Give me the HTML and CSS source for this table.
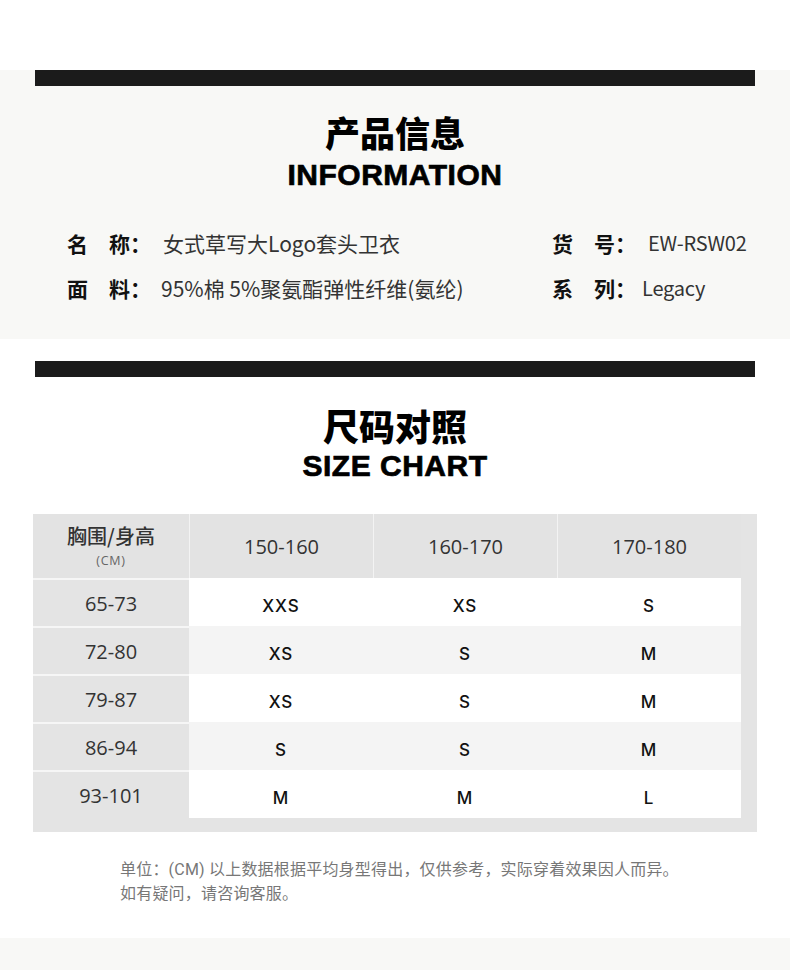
FILE: index.html
```html
<!DOCTYPE html>
<html lang="zh-CN">
<head>
<meta charset="utf-8">
<title>产品信息</title>
<link rel="stylesheet" href="styles.css">
</head>
<body>
<div class="top-space"></div>

<section class="info">
  <div class="bar"></div>
  <h1 class="title-cn">产品信息</h1>
  <h2 class="title-en">INFORMATION</h2>
  <div class="info-grid">
    <div class="info-item"><span class="label">名　称：</span><span class="value">女式草写大Logo套头卫衣</span></div>
    <div class="info-item right"><span class="label">货　号：</span><span class="value">EW-RSW02</span></div>
    <div class="info-item"><span class="label">面　料：</span><span class="value v2">95%棉 5%聚氨酯弹性纤维(氨纶)</span></div>
    <div class="info-item right"><span class="label">系　列：</span><span class="value v2">Legacy</span></div>
  </div>
</section>

<section class="size">
  <div class="bar"></div>
  <h1 class="title-cn">尺码对照</h1>
  <h2 class="title-en">SIZE CHART</h2>

  <div class="chart">
    <div class="grid">
      <div class="head first"><span class="head-cn">胸围/身高</span><span class="head-unit">(CM)</span></div>
      <div class="head">150-160</div>
      <div class="head">160-170</div>
      <div class="head">170-180</div>

      <div class="rowhead">65-73</div>
      <div class="cell">XXS</div><div class="cell">XS</div><div class="cell">S</div>

      <div class="rowhead">72-80</div>
      <div class="cell alt">XS</div><div class="cell alt">S</div><div class="cell alt">M</div>

      <div class="rowhead">79-87</div>
      <div class="cell">XS</div><div class="cell">S</div><div class="cell">M</div>

      <div class="rowhead">86-94</div>
      <div class="cell alt">S</div><div class="cell alt">S</div><div class="cell alt">M</div>

      <div class="rowhead">93-101</div>
      <div class="cell">M</div><div class="cell">M</div><div class="cell">L</div>
    </div>
  </div>

  <p class="note">单位：(CM) 以上数据根据平均身型得出，仅供参考，实际穿着效果因人而异。<br>如有疑问，请咨询客服。</p>
</section>

<div class="bottom-band"></div>
</body>
</html>
```

FILE: styles.css
```css
* { box-sizing: border-box; }
html, body { margin: 0; padding: 0; background: #ffffff; }
body { width: 790px; font-family: "Noto Sans CJK SC", sans-serif; color: #333; }
h1, h2, p { margin: 0; }

.top-space { height: 70px; }

.bar { height: 16px; margin: 0 35px; background: #1b1b1b; }

.title-cn {
  font-family: "Noto Sans CJK SC", sans-serif;
  font-weight: 900;
  font-size: 35px;
  line-height: 40px;
  text-align: center;
  color: #000;
}
.title-en {
  font-family: "Liberation Sans", Arial, sans-serif;
  font-weight: 700;
  font-size: 30px;
  line-height: 36px;
  text-align: center;
  color: #000;
  letter-spacing: 0.5px;
  -webkit-text-stroke: 0.7px #000;
}

/* info section */
.info { background: #f8f8f6; padding-bottom: 36px; }
.info .title-cn { margin-top: 26px; }
.info .title-en { margin-top: 5px; }

.info-grid {
  display: grid;
  grid-template-columns: 485px 1fr;
  row-gap: 15px;
  padding-left: 67px;
  margin-top: 35px;
}
.info-item { display: flex; align-items: center; height: 30px; font-size: 21px; line-height: 30px; }
.label { font-weight: 700; color: #111; width: 96px; flex: none; }
.right .label { width: 96px; }
.value { color: #333; }
.right .value { font-size: 20px; letter-spacing: -0.2px; }
.info-item .v2 { margin-left: -2px; }
.right .v2 { margin-left: -6px; }

/* size section */
.size { padding-top: 22px; }
.size .title-cn { margin-top: 26px; font-size: 36px; line-height: 44px; }
.size .title-en { margin-top: 1px; }

.chart {
  margin: 30px 33px 0;
  background: #e4e4e4;
  padding: 0 16px 14px 0;
}
.grid {
  display: grid;
  grid-template-columns: 156px repeat(3, 184px);
  grid-auto-rows: 48px;
  grid-template-rows: 64px;
}
.head {
  background: #e3e3e3;
  border-left: 1px solid #f3f3f3;
  display: flex;
  align-items: center;
  justify-content: center;
  font-family: "Open Sans", sans-serif;
  font-size: 20px;
  color: #333;
}
.head.first {
  border-left: none;
  flex-direction: column;
  padding-top: 2px;
}
.head-cn {
  font-family: "Noto Sans CJK SC", sans-serif;
  font-size: 20px;
  font-weight: 500;
  line-height: 22px;
  color: #333;
}
.head-unit {
  font-family: "Open Sans", sans-serif;
  font-size: 12.5px;
  line-height: 16px;
  margin-top: 6px;
  color: #666;
  letter-spacing: 0.8px;
}
.rowhead {
  background: #e4e4e4;
  border-top: 2px solid #f6f6f6;
  display: flex;
  align-items: center;
  justify-content: center;
  font-family: "Open Sans", sans-serif;
  font-size: 20px;
  color: #333;
}
.cell {
  background: #ffffff;
  display: flex;
  align-items: center;
  justify-content: center;
  font-family: "Inter", sans-serif;
  font-weight: 500;
  font-size: 17px;
  letter-spacing: 1px;
  color: #111;
  padding-top: 7px;
}
.cell.alt { background: #f4f4f4; }

.note {
  margin: 26px 0 0 120px;
  font-family: "Roboto", "Noto Sans CJK SC", sans-serif;
  font-size: 16px;
  line-height: 24px;
  color: #777;
  letter-spacing: 0.2px;
}

.bottom-band { height: 32px; margin-top: 32px; background: #f8f8f6; }
```
